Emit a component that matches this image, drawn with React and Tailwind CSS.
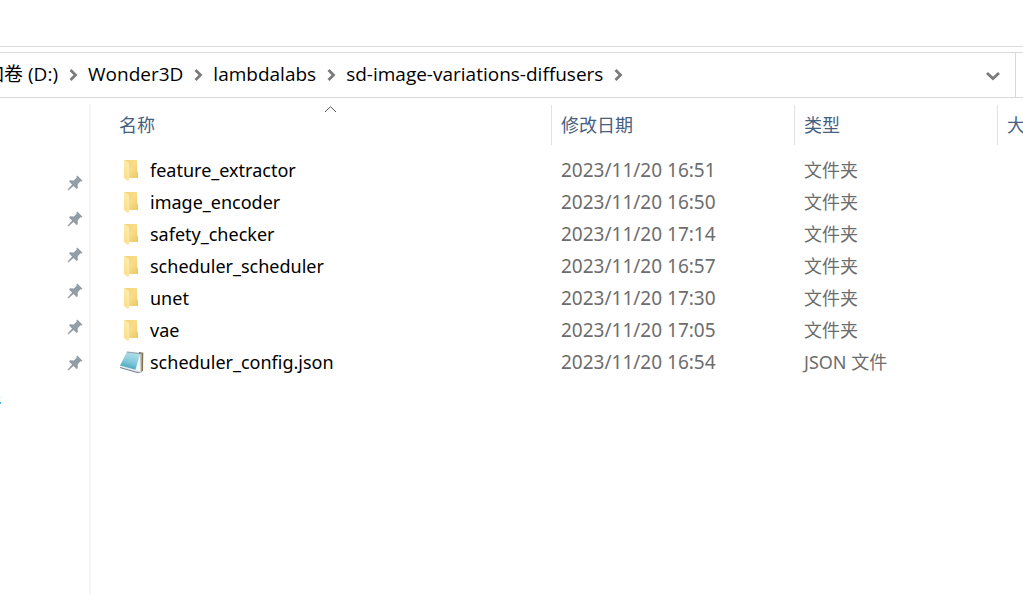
const path = ['Wonder3D', 'lambdalabs', 'sd-image-variations-diffusers'];

const files = [
  { name: 'feature_extractor', date: '2023/11/20 16:51', type: '文件夹' },
  { name: 'image_encoder', date: '2023/11/20 16:50', type: '文件夹' },
  { name: 'safety_checker', date: '2023/11/20 17:14', type: '文件夹' },
  { name: 'scheduler_scheduler', date: '2023/11/20 16:57', type: '文件夹' },
  { name: 'unet', date: '2023/11/20 17:30', type: '文件夹' },
  { name: 'vae', date: '2023/11/20 17:05', type: '文件夹' },
  { name: 'scheduler_config.json', date: '2023/11/20 16:54', type: 'JSON 文件', file: true },
];

function Chevron() {
  return (
    <svg className="h-4 w-[30px] shrink-0" viewBox="0 0 30 16" fill="none" aria-hidden="true">
      <path d="M12.500 4l5 5-5 5" stroke="#7b7b7b" strokeWidth="2.800" />
    </svg>
  );
}

function FolderIcon() {
  return (
    <svg className="h-6 w-6 shrink-0" viewBox="0 0 24 24" aria-hidden="true">
      <defs>
        <linearGradient id="folder-back" x1="0" y1="0" x2="1" y2="1">
          <stop offset="0" stopColor="#f3d47c" />
          <stop offset="0.500" stopColor="#f9dd87" />
          <stop offset="1" stopColor="#e9c766" />
        </linearGradient>
        <linearGradient id="folder-front" x1="0" y1="0" x2="0" y2="1">
          <stop offset="0" stopColor="#ffebac" />
          <stop offset="1" stopColor="#fbdc89" />
        </linearGradient>
      </defs>
      <path d="M4 2h13v11l1 1v6H4z" fill="url(#folder-back)" />
      <path d="M4 2l5 3v16.500L8 23l-4-3z" fill="url(#folder-front)" />
      <path d="M8 6v16" stroke="#fff0be" strokeWidth="0.800" />
    </svg>
  );
}

function NotepadIcon() {
  return (
    <svg className="h-6 w-6 shrink-0" viewBox="0 0 24 24" aria-hidden="true">
      <defs>
        <linearGradient id="note-cover" x1="0.700" y1="0" x2="0.400" y2="1">
          <stop offset="0" stopColor="#b5e1e9" />
          <stop offset="0.550" stopColor="#84c8da" />
          <stop offset="1" stopColor="#43a2be" />
        </linearGradient>
      </defs>
      <path d="M19 2l4.300.8L23 20.500l-2 2z" fill="#8a6f42" />
      <path d="M19.500 3l2.200.6-.2 18.900-5.500-2z" fill="#b8c5ca" />
      <path d="M19.800 4l.7 18-5-2z" fill="#f2f6f6" />
      <path d="M0 16l15.500 4.200 5.500 2.300-4 .5L0 18z" fill="#75838a" />
      <path d="M0 15.500l15.500 4.300 5 2.200-4-.2L0 17z" fill="#e8eef0" />
      <path d="M7 2l13 1.500-4.500 16.300L0 15.500z" fill="url(#note-cover)" />
      <path d="M6.800 2L20.500 3.500" stroke="#5f7780" strokeWidth="1.200" />
      <path d="M8 .7v2M10 .9v2M12 1.100v2M14 1.300v2M16 1.500v2M18 1.700v2" stroke="#e5eef0" strokeWidth="0.800" />
    </svg>
  );
}

function PinIcon() {
  return (
    <svg className="h-4 w-4" viewBox="0 0 16 16" aria-hidden="true">
      <path
        d="M10.300.5L15.500 5.700 14.500 6.600 13.600 6.300 10.700 9.200 10.800 13.200 9.500 14 6.500 10.900 1.300 15.500.500 14.800 5.100 9.500 2 6.500 3 5.300 6.800 5.500 9.800 2.400 9.400 1.400z"
        fill="#929da5"
      />
    </svg>
  );
}

const headLabel = 'flex h-10 items-center text-lg leading-6 font-normal text-[#46607f]';

export default function App() {
  return (
    <div className="flex min-h-screen flex-col overflow-hidden bg-white font-['Noto_Sans','Noto_Sans_CJK_SC',sans-serif] text-lg text-black">
      <header>
        <div className="h-[47px] border-b border-[#dadada]" />
        <div className="mt-[5px] flex h-[46px] border-y border-[#d9d9d9]">
          <nav
            aria-label="路径"
            className="flex min-w-0 flex-1 items-center border-r border-[#d9d9d9] pb-0.5 font-['Open_Sans','Noto_Sans_CJK_SC',sans-serif] text-[19px] leading-6"
          >
            <a href="#drive" className="flex w-[58px] shrink-0 justify-end overflow-hidden whitespace-nowrap">
              <span>新加卷 (D:)</span>
            </a>
            <Chevron />
            {path.map((part) => (
              <span key={part} className="flex items-center">
                <a href={`#${part}`} className="whitespace-nowrap">{part}</a>
                <Chevron />
              </span>
            ))}
            <button type="button" aria-label="以前的位置" className="mr-2 ml-auto p-1">
              <svg className="h-4 w-5" viewBox="0 0 20 16" fill="none" aria-hidden="true">
                <path d="M4 7l6 5.500L16 7" stroke="#7b7b7b" strokeWidth="2.800" />
              </svg>
            </button>
          </nav>
          <div className="w-[7px] shrink-0" />
        </div>
      </header>

      <div className="flex flex-1">
        <aside className="mt-1.5 w-[91px] shrink-0 border-r-2 border-[#f5f5f5] pt-[61px]">
          <ul>
            {[1, 2, 3, 4, 5, 6].map((n) => (
              <li key={n} className="flex h-9 items-center justify-end pr-1.5">
                <button type="button" aria-label={`已固定 ${n}`}>
                  <PinIcon />
                </button>
              </li>
            ))}
          </ul>
          <svg className="mt-4 h-3 w-1" viewBox="0 0 4 12" aria-hidden="true">
            <path d="M0 0h1v1H0z" fill="#c9effb" />
            <path d="M0 5h1v2H0z" fill="#49b1ef" />
          </svg>
        </aside>

        <main className="min-w-0 flex-1">
          <table className="w-full table-fixed border-collapse text-left">
            <colgroup>
              <col className="w-[460px]" />
              <col className="w-[243px]" />
              <col className="w-[203px]" />
              <col />
            </colgroup>
            <thead>
              <tr className="h-14">
                <th className="relative p-0 pt-[7px] align-top">
                  <svg className="absolute top-2 left-[233px] h-2 w-3" viewBox="0 0 12 8" fill="none" aria-hidden="true">
                    <path d="M1 6L6.500 .7 12 6" stroke="#555" />
                  </svg>
                  <div className={`${headLabel} pl-7`}>名称</div>
                </th>
                {['修改日期', '类型', '大小'].map((label) => (
                  <th key={label} className="overflow-hidden p-0 pt-[7px] align-top whitespace-nowrap">
                    <div className={`${headLabel} border-l border-[#e2e2e2] pl-[9px]`}>{label}</div>
                  </th>
                ))}
              </tr>
            </thead>
            <tbody>
              {files.map((f) => (
                <tr key={f.name} className="h-8 text-[#6d6d6d]">
                  <td className="p-0 pl-[29px]">
                    <div className="flex items-center gap-1.5 leading-6 text-black">
                      {f.file ? <NotepadIcon /> : <FolderIcon />}
                      <span>{f.name}</span>
                    </div>
                  </td>
                  <td className="p-0 pl-2.5 text-[19px] leading-6">{f.date}</td>
                  <td className="p-0 pl-2.5 leading-6">{f.type}</td>
                  <td className="p-0" />
                </tr>
              ))}
            </tbody>
          </table>
        </main>
      </div>
    </div>
  );
}
